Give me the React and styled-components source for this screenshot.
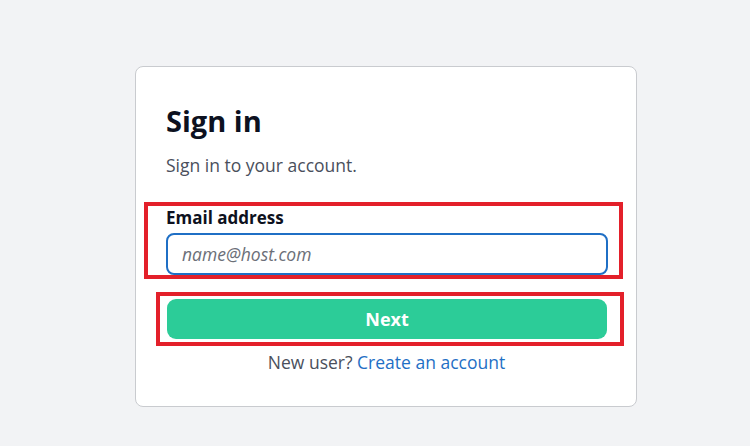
import * as React from "react";
import styled, { createGlobalStyle } from "styled-components";

const GlobalStyle = createGlobalStyle`
  html, body {
    margin: 0;
    padding: 0;
    background: #f2f3f5;
    font-family: "Open Sans", "Liberation Sans", sans-serif;
  }
`;

const App = () => {
  return (
    <>
      <GlobalStyle />
      <Page>
        <Card>
          <Title>Sign in</Title>
          <Subtitle>Sign in to your account.</Subtitle>
          <Field>
            <Highlight $top={-4} $left={-22} $right={-16} $bottom={-4} />
            <Label htmlFor="email">Email address</Label>
            <Input id="email" type="email" placeholder="name@host.com" />
          </Field>
          <Action>
            <Highlight $top={-7} $left={-11} $right={-17} $bottom={-7} />
            <NextButton type="button">Next</NextButton>
          </Action>
          <Footer>
            New user? <FooterLink href="#">Create an account</FooterLink>
          </Footer>
        </Card>
      </Page>
    </>
  );
};

const Page = styled.div`
  height: 446px;
  padding: 66px 0 0 135px;
  box-sizing: border-box;
`;

const Card = styled.div`
  width: 502px;
  height: 341px;
  box-sizing: border-box;
  background: #ffffff;
  border: 1px solid #c9cbcf;
  border-radius: 8px;
  padding: 34px 29px 0 30px;
  display: flex;
  flex-direction: column;
`;

const Title = styled.h1`
  margin: 0;
  font-size: 29px;
  line-height: 40px;
  font-weight: 700;
  color: #0d1120;
`;

const Subtitle = styled.p`
  margin: 12px 0 0;
  font-size: 17.5px;
  line-height: 24px;
  color: #4a4f5c;
`;

const Field = styled.div`
  position: relative;
  margin-top: 29px;
  display: flex;
  flex-direction: column;
`;

const Highlight = styled.div`
  position: absolute;
  top: ${(p) => p.$top}px;
  left: ${(p) => p.$left}px;
  right: ${(p) => p.$right}px;
  bottom: ${(p) => p.$bottom}px;
  border: 4.5px solid #e3202a;
  pointer-events: none;
`;

const Label = styled.label`
  font-size: 17px;
  line-height: 23px;
  font-weight: 700;
  color: #0d1120;
`;

const Input = styled.input`
  margin-top: 4px;
  width: 442px;
  height: 42px;
  box-sizing: border-box;
  border: 2px solid #1f6fc5;
  border-radius: 8px;
  padding: 0 14px;
  font-family: inherit;
  font-size: 17.5px;
  color: #222;
  background: #fff;
  outline: none;

  &::placeholder {
    font-style: italic;
    color: #6b6f78;
  }
`;

const Action = styled.div`
  position: relative;
  margin-top: 24px;
  margin-left: 1px;
  width: 440px;
`;

const NextButton = styled.button`
  display: block;
  width: 100%;
  height: 40px;
  border: none;
  border-radius: 9px;
  background: #2ccc98;
  color: #ffffff;
  font-family: inherit;
  font-size: 18px;
  font-weight: 700;
  cursor: pointer;
`;

const Footer = styled.p`
  margin: 11px 0 0;
  text-align: center;
  font-size: 17.5px;
  line-height: 24px;
  color: #4a4f5c;
`;

const FooterLink = styled.a`
  color: #1f6fc5;
  text-decoration: none;
`;

export default App;
